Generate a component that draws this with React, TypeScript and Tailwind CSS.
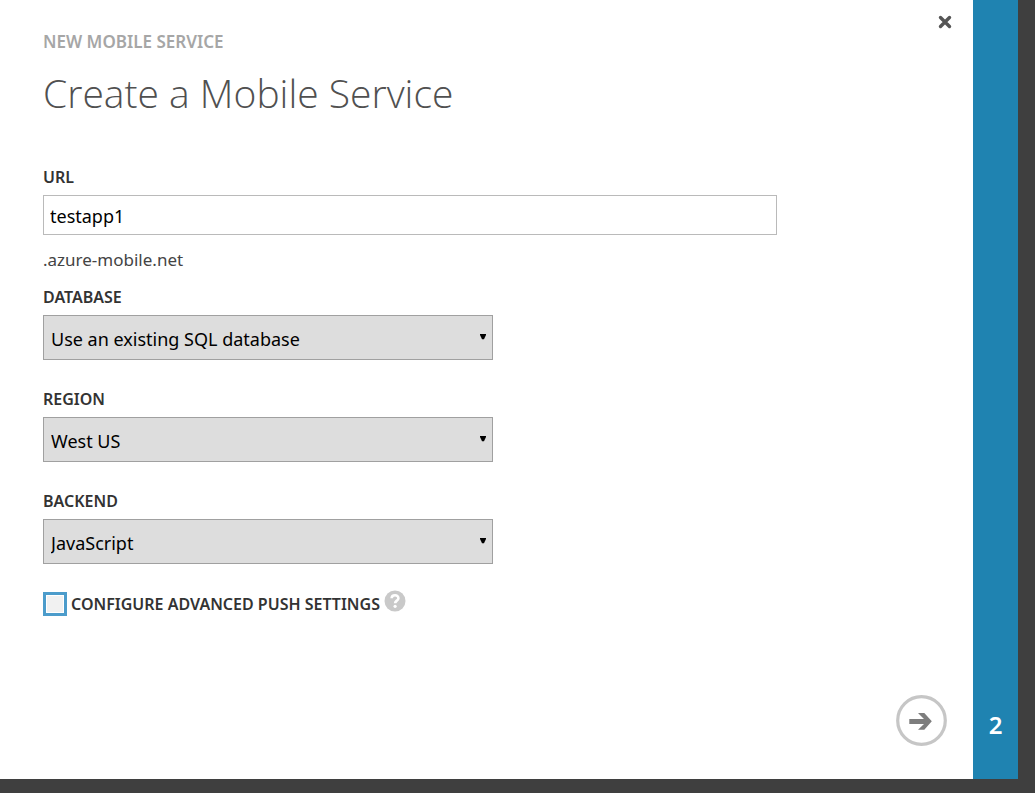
import { useId, useState } from "react";

type SelectFieldProps = {
  label: string;
  options: string[];
};

function SelectField({ label, options }: SelectFieldProps) {
  const id = useId();
  return (
    <div className="flex flex-col gap-1.5">
      <label htmlFor={id} className="text-base leading-6 font-semibold text-[#333333]">
        {label}
      </label>
      <div className="relative max-w-[450px]">
        <select
          id={id}
          className="block h-[45px] w-full appearance-none rounded-none border border-[#a0a0a0] bg-[#dddddd] pt-0.5 pr-8 pl-[7px] text-lg text-black"
        >
          {options.map((option) => (
            <option key={option}>{option}</option>
          ))}
        </select>
        <svg
          viewBox="0 0 6 6"
          className="pointer-events-none absolute top-[19px] right-[7px] size-1.5"
          aria-hidden="true"
        >
          <path d="M0 0H6V1L4 5.2H2L0 1Z" fill="#000" />
        </svg>
      </div>
    </div>
  );
}

export default function App() {
  const [name, setName] = useState("testapp1");
  const [push, setPush] = useState(false);

  return (
    <div className="flex min-h-screen bg-[#3f3f3f] pr-[17px] pb-3.5 font-['Noto_Sans','Open_Sans',sans-serif]">
      <main className="flex flex-1 flex-col bg-white pl-[43px]">
        <header className="flex items-start justify-between pt-3.5 pr-5">
          <div className="pt-4">
            <p className="text-[17px] leading-6 font-semibold text-[#a6a6a6]">NEW MOBILE SERVICE</p>
            <h1 className="mt-2 font-['Open_Sans','Noto_Sans',sans-serif] text-[39px] leading-[62px] font-light text-[#505050]">
              Create a Mobile Service
            </h1>
          </div>
          <button type="button" aria-label="Close" className="flex size-4 items-center justify-center">
            <svg viewBox="0 0 14 14" className="size-3.5" aria-hidden="true">
              <path d="M2.5 2.5L11.5 11.5M11.5 2.5L2.5 11.5" stroke="#555" strokeWidth="3.4" strokeLinecap="round" />
            </svg>
          </button>
        </header>

        <form className="mt-[41px] flex flex-col" onSubmit={(e) => e.preventDefault()}>
          <div className="flex max-w-[734px] flex-col">
            <label htmlFor="url" className="text-base leading-6 font-semibold text-[#333333]">
              URL
            </label>
            <input
              id="url"
              type="text"
              value={name}
              onChange={(e) => setName(e.target.value)}
              className="mt-1.5 h-10 w-full border border-[#bababa] bg-white px-1.5 pt-0.5 text-lg text-black"
            />
            <p className="mt-[13px] text-[17px] leading-6 text-[#444444]">.azure-mobile.net</p>
          </div>

          <div className="mt-[13px] flex flex-col gap-[27px]">
            <SelectField
              label="DATABASE"
              options={["Use an existing SQL database", "Create a new SQL database"]}
            />
            <SelectField label="REGION" options={["West US", "East US"]} />
            <SelectField label="BACKEND" options={["JavaScript", ".NET"]} />
          </div>

          <div className="mt-[26px] flex items-center">
            <input
              id="push"
              type="checkbox"
              checked={push}
              onChange={(e) => setPush(e.target.checked)}
              className="size-6 appearance-none border-[3px] border-[#4c9ccb] bg-[#f1f1f1] inset-ring inset-ring-white checked:bg-[#4c9ccb]"
            />
            <label htmlFor="push" className="ml-1 text-base leading-6 font-semibold text-[#333333]">
              CONFIGURE ADVANCED PUSH SETTINGS
            </label>
            <button type="button" aria-label="Help" className="mb-1.5 ml-1">
              <svg viewBox="0 0 22 22" className="size-[22px]" aria-hidden="true">
                <circle cx="11" cy="11" r="10.5" fill="#c9c9c9" />
                <path
                  d="M7.6 8.3C7.7 4.2 14.4 4.2 14.4 8.2C14.4 10.6 11.1 10.7 11.1 13.3"
                  fill="none"
                  stroke="#fff"
                  strokeWidth="2.6"
                />
                <circle cx="11.1" cy="16.3" r="1.6" fill="#fff" />
              </svg>
            </button>
          </div>
        </form>

        <footer className="mt-auto flex justify-end pt-8 pr-[26px] pb-[33px]">
          <button type="button" aria-label="Next">
            <svg viewBox="0 0 51 51" className="size-[51px]" fill="none" aria-hidden="true">
              <circle cx="25.5" cy="25.5" r="23.8" stroke="#c6c6c6" strokeWidth="3.2" />
              <path d="M13.3 24H28L22 18H28.3L35.8 26.3L28.3 34.8H22L28 28.9H13.3Z" fill="#7d7d7d" />
            </svg>
          </button>
        </footer>
      </main>

      <aside className="flex w-[45px] flex-col justify-end bg-[#1f83b1] pb-[38px]">
        <button type="button" className="text-2xl leading-8 font-semibold text-white">
          2
        </button>
      </aside>
    </div>
  );
}
